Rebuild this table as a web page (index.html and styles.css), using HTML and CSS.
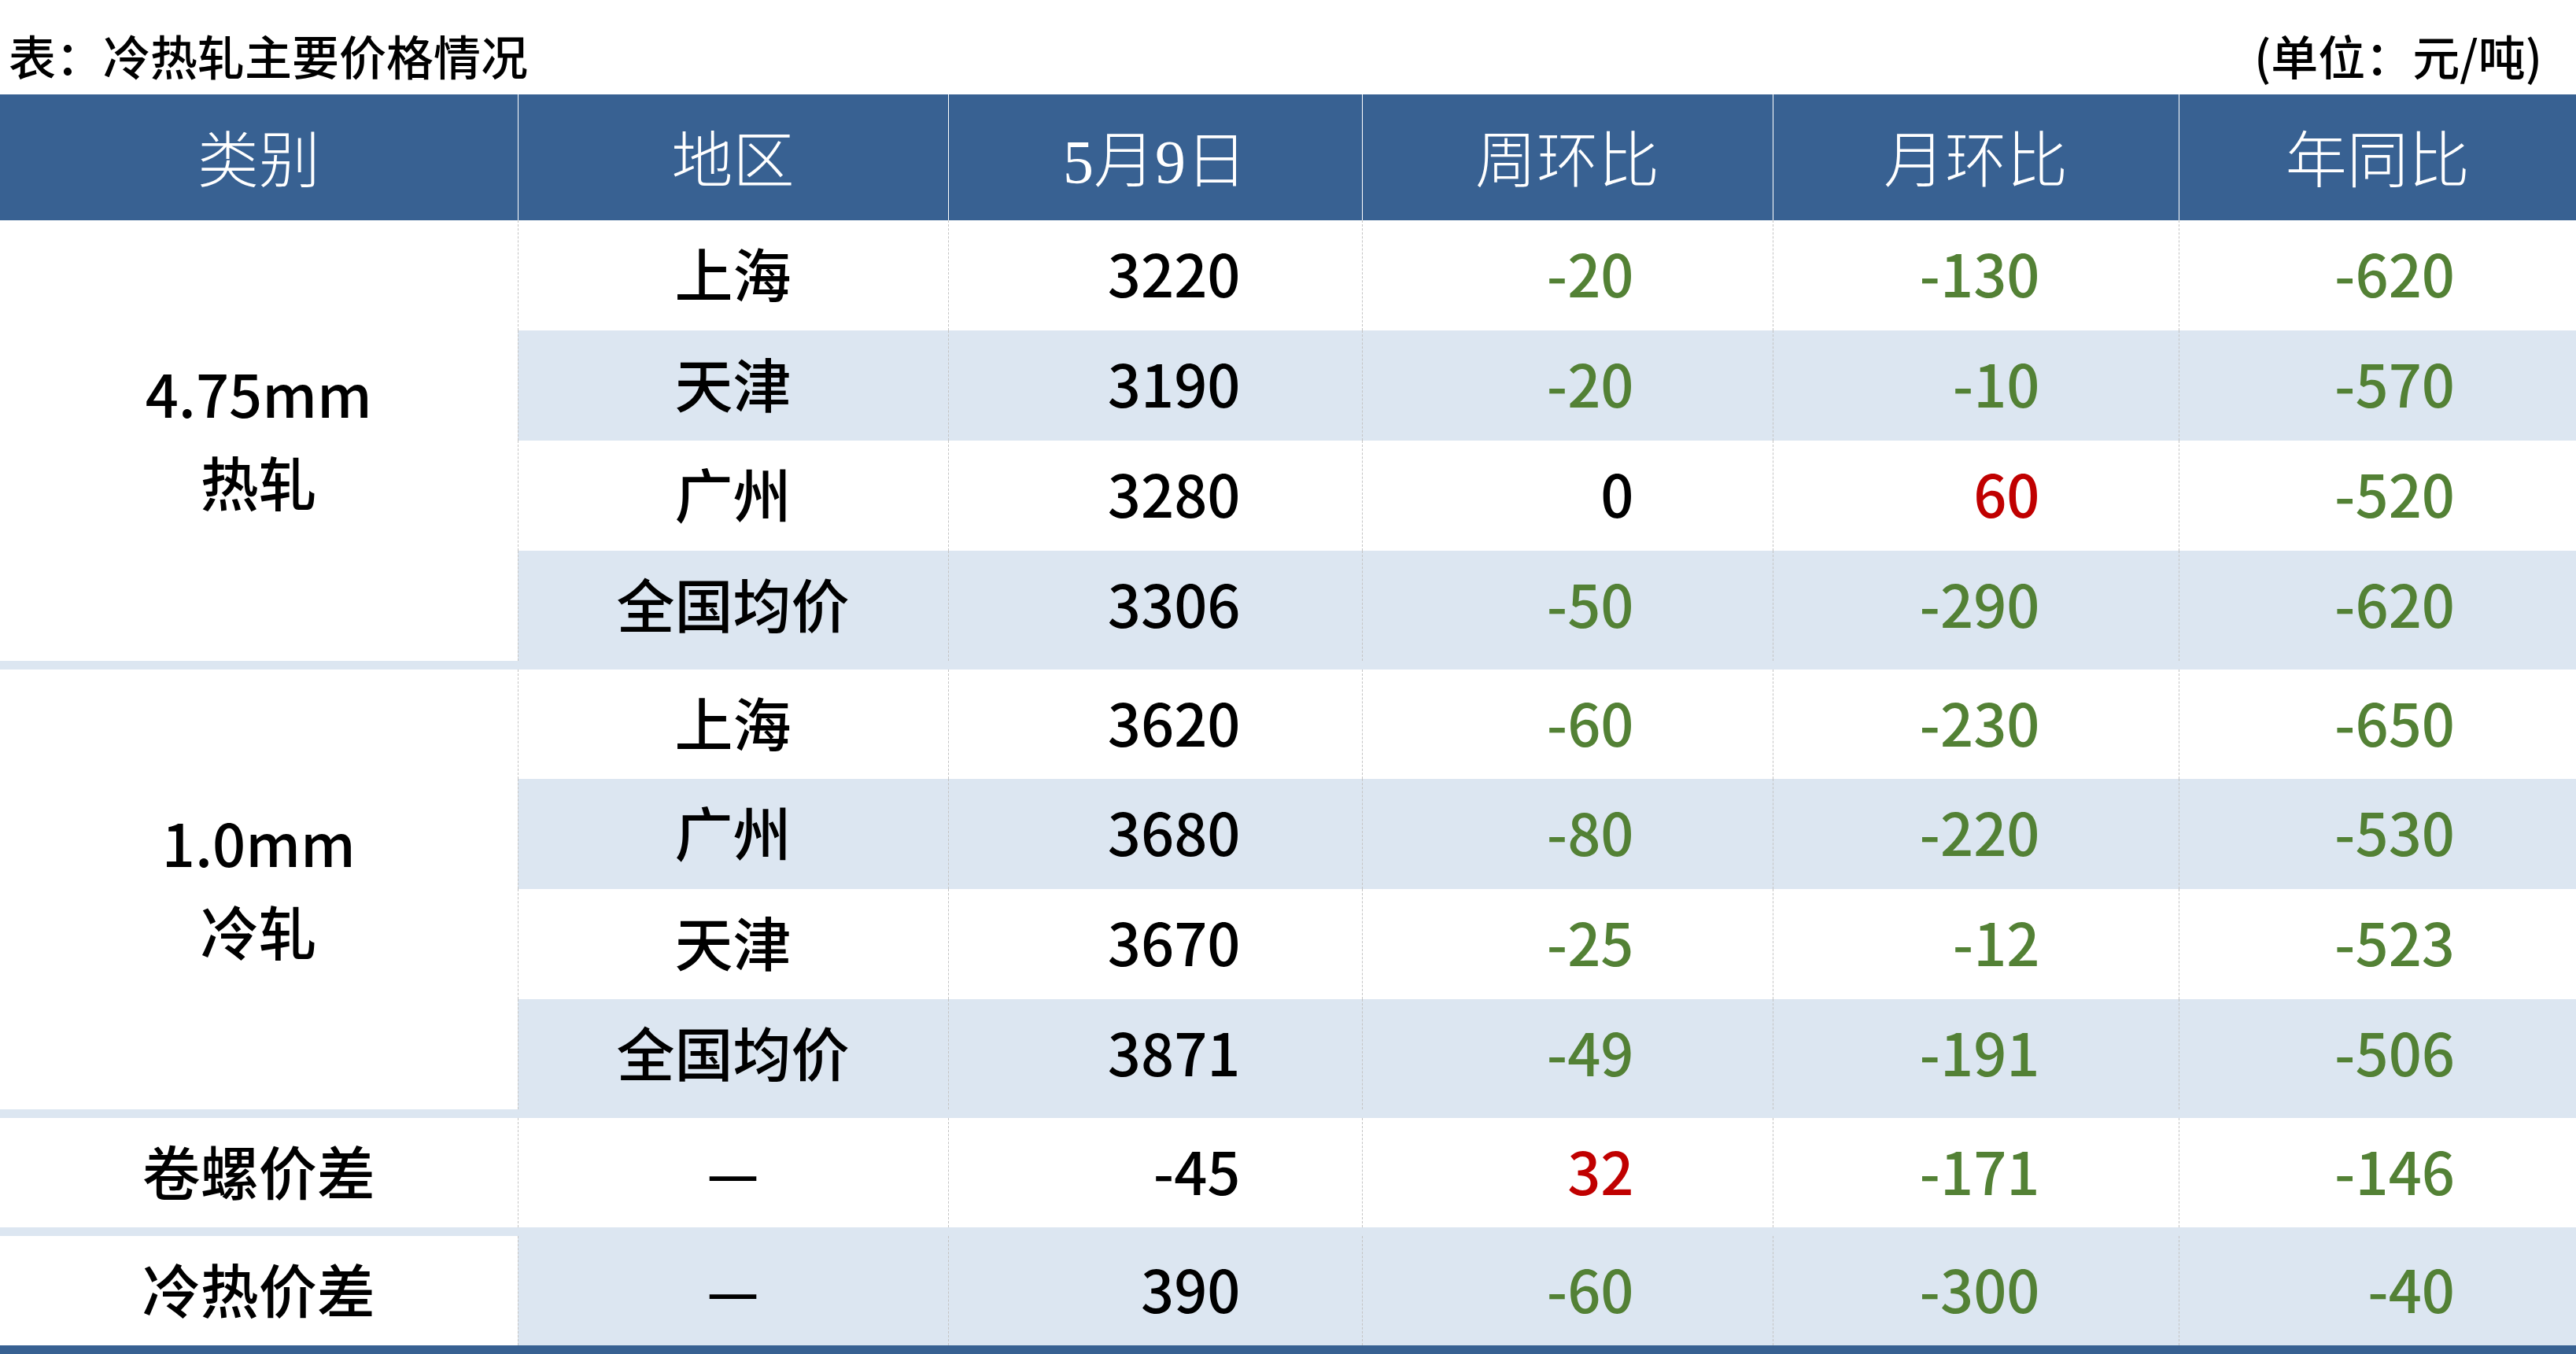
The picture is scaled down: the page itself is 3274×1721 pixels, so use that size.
FILE: index.html
```html
<!DOCTYPE html>
<html lang="zh-CN">
<head>
<meta charset="utf-8">
<title>冷热轧主要价格情况</title>
<link rel="stylesheet" href="styles.css">
</head>
<body>
<div class="page">
  <div class="caption">
    <span class="caption-title">表：冷热轧主要价格情况</span>
    <span class="caption-unit">(单位：元/吨)</span>
  </div>
  <table class="price-table">
    <colgroup>
      <col class="w-cat"><col class="w-region"><col class="w-date"><col class="w-week"><col class="w-month"><col class="w-year">
    </colgroup>
    <thead>
      <tr class="head">
        <th>类别</th><th>地区</th><th>5月9日</th><th>周环比</th><th>月环比</th><th>年同比</th>
      </tr>
    </thead>
    <tbody>
      <tr class="row">
        <td class="label" rowspan="4"><span class="label-text">4.75mm<br>热轧</span></td>
        <td class="region">上海</td><td class="num v3">3220</td><td class="num v4 down">-20</td><td class="num v5 down">-130</td><td class="num v6 down">-620</td>
      </tr>
      <tr class="row alt">
        <td class="region">天津</td><td class="num v3">3190</td><td class="num v4 down">-20</td><td class="num v5 down">-10</td><td class="num v6 down">-570</td>
      </tr>
      <tr class="row">
        <td class="region">广州</td><td class="num v3">3280</td><td class="num v4">0</td><td class="num v5 up">60</td><td class="num v6 down">-520</td>
      </tr>
      <tr class="row alt">
        <td class="region">全国均价</td><td class="num v3">3306</td><td class="num v4 down">-50</td><td class="num v5 down">-290</td><td class="num v6 down">-620</td>
      </tr>
      <tr class="sep"><td colspan="6"></td></tr>

      <tr class="row short">
        <td class="label" rowspan="4"><span class="label-text">1.0mm<br>冷轧</span></td>
        <td class="region">上海</td><td class="num v3">3620</td><td class="num v4 down">-60</td><td class="num v5 down">-230</td><td class="num v6 down">-650</td>
      </tr>
      <tr class="row alt">
        <td class="region">广州</td><td class="num v3">3680</td><td class="num v4 down">-80</td><td class="num v5 down">-220</td><td class="num v6 down">-530</td>
      </tr>
      <tr class="row">
        <td class="region">天津</td><td class="num v3">3670</td><td class="num v4 down">-25</td><td class="num v5 down">-12</td><td class="num v6 down">-523</td>
      </tr>
      <tr class="row alt">
        <td class="region">全国均价</td><td class="num v3">3871</td><td class="num v4 down">-49</td><td class="num v5 down">-191</td><td class="num v6 down">-506</td>
      </tr>
      <tr class="sep"><td colspan="6"></td></tr>

      <tr class="row short">
        <td class="label">卷螺价差</td>
        <td class="region">—</td><td class="num v3">-45</td><td class="num v4 up">32</td><td class="num v5 down">-171</td><td class="num v6 down">-146</td>
      </tr>
      <tr class="sep"><td colspan="6"></td></tr>

      <tr class="row alt short">
        <td class="label">冷热价差</td>
        <td class="region">—</td><td class="num v3">390</td><td class="num v4 down">-60</td><td class="num v5 down">-300</td><td class="num v6 down">-40</td>
      </tr>
    </tbody>
  </table>
  <div class="bottom-bar"></div>
</div>
</body>
</html>
```

FILE: styles.css
```css
html, body {
  margin: 0;
  padding: 0;
  background: #ffffff;
}

.page {
  width: 3274px;
  font-family: "Noto Sans CJK SC", "Noto Sans", sans-serif;
  color: #000000;
}

.caption {
  height: 120px;
  box-sizing: border-box;
  display: flex;
  justify-content: space-between;
  align-items: center;
  padding: 20px 43px 0 11px;
  font-size: 60px;
  line-height: 60px;
  font-weight: 500;
}

.price-table {
  width: 3274px;
  table-layout: fixed;
  border-collapse: collapse;
  border-spacing: 0;
}

.w-cat { width: 658px; }
.w-region { width: 547px; }
.w-date { width: 526px; }
.w-week { width: 522px; }
.w-month { width: 516px; }
.w-year { width: 505px; }

.head th {
  height: 160px;
  box-sizing: border-box;
  padding: 11px 0 0 0;
  background: #386192;
  color: #ffffff;
  font-family: "Liberation Serif", "Noto Sans CJK SC", serif;
  font-weight: 300;
  font-size: 78px;
  line-height: 80px;
  text-align: center;
  vertical-align: middle;
  border-left: 1px solid #ffffff;
}

.head th:first-child {
  border-left: none;
}

.row td {
  height: 140px;
  box-sizing: border-box;
  padding: 0 0 8px 0;
  font-size: 74px;
  line-height: 80px;
  font-weight: 500;
  vertical-align: middle;
  border-left: 1px dashed #c4c4c4;
  background: #ffffff;
}

.row.short td {
  height: 139px;
}

.row.alt td {
  background: #dce6f1;
}

.row td.label,
.row.alt td.label {
  background: #ffffff;
  text-align: center;
  border-left: none;
}

.label-text {
  display: inline-block;
  line-height: 112px;
  padding-bottom: 2px;
}

.region {
  text-align: center;
}

.num {
  text-align: right;
}

.v3 { padding-right: 154px !important; }
.v4 { padding-right: 176px !important; }
.v5 { padding-right: 176px !important; }
.v6 { padding-right: 154px !important; }

.down { color: #538135; }
.up { color: #c00000; }

.sep td {
  height: 11px;
  padding: 0;
  background: #dce6f1;
  font-size: 0;
  line-height: 0;
  border: none;
}

.bottom-bar {
  height: 11px;
  background: #386192;
}
```
